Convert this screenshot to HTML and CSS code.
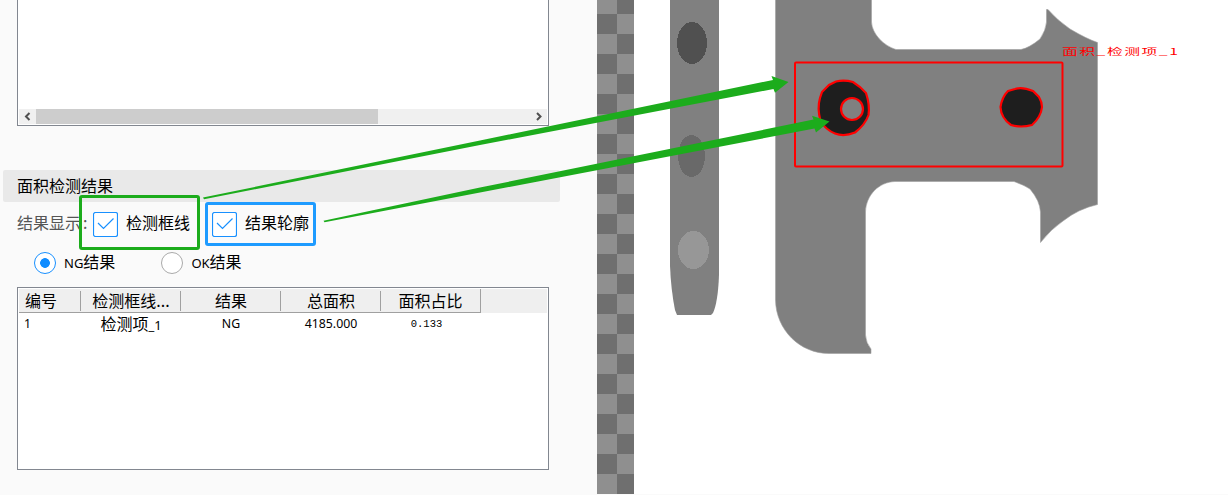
FILE: index.html
```html
<!DOCTYPE html>
<html lang="zh-CN">
<head>
<meta charset="utf-8">
<title>面积检测结果</title>
<link rel="stylesheet" href="styles.css">
</head>
<body>
<main class="app">
  <section class="panel">
    <div class="list">
      <div class="scrollbar">
        <svg class="scroll-arrow" viewBox="0 0 17 15"><path d="M10.500 4 7 7.500l3.500 3.500"/></svg>
        <div class="thumb"></div>
        <svg class="scroll-arrow" viewBox="0 0 17 15"><path d="M7 4l3.500 3.500L7 11"/></svg>
      </div>
    </div>
    <h2 class="title">面积检测结果</h2>
    <div class="options">
      <span class="caption">结果显示<span class="colon">:</span></span>
      <label class="check"><svg class="box" viewBox="0 0 25 25"><rect x=".5" y=".5" width="24" height="24" rx="2"/><path d="M5 11l5.500 5.500L20.500 6.500"/></svg><span class="label">检测框线</span></label>
      <label class="check second"><svg class="box" viewBox="0 0 25 25"><rect x=".5" y=".5" width="24" height="24" rx="2"/><path d="M5 11l5.500 5.500L20.500 6.500"/></svg><span class="label">结果轮廓</span></label>
    </div>
    <div class="radios">
      <label class="radio"><span class="dot on"></span><span class="choice"><span class="latin">NG</span>结果</span></label>
      <label class="radio"><span class="dot"></span><span class="choice"><span class="latin">OK</span>结果</span></label>
    </div>
    <div class="table">
      <div class="row head">
        <div class="cell first">编号</div><div class="cell">检测框线...</div><div class="cell">结果</div><div class="cell">总面积</div><div class="cell">面积占比</div>
      </div>
      <div class="row">
        <div class="cell first latin">1</div><div class="cell"><span>检测项<span class="latin">_1</span></span></div><div class="cell latin">NG</div><div class="cell latin">4185.000</div><div class="cell mono">0.133</div>
      </div>
    </div>
  </section>
  <div class="checker"></div>
  <section class="view">
    <svg class="scene" viewBox="634 0 594 495">
      <path fill="#808080" d="M670 0H719V275Q718 302 713 313L711 315H677L675 310Q671 290 670 266Z"/>
      <g shape-rendering="crispEdges">
        <ellipse cx="692" cy="43" rx="15" ry="21" fill="#505050"/>
        <ellipse cx="691.500" cy="156" rx="13.500" ry="21" fill="#696969"/>
        <ellipse cx="693.500" cy="250" rx="15.500" ry="19" fill="#979797"/>
      </g>
      <path fill="#808080" stroke="#a0a0a0" stroke-width=".6" d="M775.500-2V300C776 330 800 353.500 829 353.500H871V349Q866 343 865.500 335V212C866 195 879 182 895 181.500H1014Q1024 185 1030 189Q1040 201 1040.500 212V242.500Q1051 229 1063 221Q1078 209 1097.500 204.500V42.500Q1087 39 1070 29Q1057 20 1048 9.500H1046.500V22Q1046 30 1040 39Q1029 48 1021 49.500H896C884 46 872 34 871.500 22V-2Z"/>
      <g stroke="#f00" fill="none" stroke-width="2.200">
        <rect x="795" y="62.500" width="267.500" height="104" rx="1" stroke-width="2"/>
        <path fill="#1e1e1e" d="M836 81.500Q844 79.500 853 82L860 87 866 93Q870 105 868.500 115 865 125 855 132.500 844 137 835 133.500 826 130 820.500 121 817 108 820 98L822 92 829 85Z"/>
        <circle cx="852" cy="109" r="11" fill="#808080"/>
        <path fill="#1e1e1e" d="M1008 91L1015 89Q1022 86.500 1033 91L1039 97Q1042 102 1042 107 1041 117 1032 125 1021 128 1011 125 1001 118 1000.500 107 1002 97 1008 91Z"/>
      </g>
      <text class="tag" x="0" y="0" transform="translate(1062 55) scale(1.500 .85)" textLength="77.300">面积_检测项_1</text>
    </svg>
  </section>
  <div class="frame frame-green"></div>
  <div class="frame frame-blue"></div>
  <svg class="arrows" viewBox="0 0 1228 495">
    <path d="M203 197.600L480 140.400 773 80 771.500 76 788.500 82 775 92.700 773.500 89 480 145 204 199.300Z"/>
    <path d="M323.500 220.700L480 187.500 813.500 119.600 812 115.800 829.500 121.500 816 132.500 814.500 128.500 480 192.500 324.500 222.300Z"/>
  </svg>
</main>
</body>
</html>
```
FILE: styles.css
```css
* { box-sizing: border-box; }
body { margin: 0; }
.app {
  position: relative;
  display: flex;
  width: 1228px;
  height: 495px;
  overflow: hidden;
  background: #fafafa;
  color: #000;
  font: 16px/22px "Noto Sans CJK SC", sans-serif;
}
.panel { width: 597px; display: flex; flex-direction: column; align-items: flex-start; }
.list {
  width: 532px;
  height: 126px;
  margin-left: 17px;
  padding: 1px;
  border: 1px solid #828790;
  border-top: 0;
  background: #fff;
  display: flex;
  align-items: flex-end;
}
.scrollbar { display: flex; width: 100%; height: 15px; background: #f0f0f0; }
.scroll-arrow { width: 17px; height: 15px; fill: none; stroke: #505050; stroke-width: 2; }
.thumb { width: 342px; margin-right: 152px; background: #cdcdcd; }
.title {
  width: 557px;
  height: 32px;
  margin: 44px 0 0 3px;
  padding-left: 14px;
  border-radius: 2px;
  background: #e9e9e9;
  font-size: 16px;
  font-weight: 400;
  line-height: 30px;
}
.options { display: flex; align-items: center; height: 45px; padding-left: 17px; }
.caption { width: 76px; padding-bottom: 5px; color: #555; }
.colon { margin-left: 2px; }
.check { display: flex; align-items: center; gap: 8px; }
.label { padding-bottom: 5px; }
.second { margin-left: 22px; }
.box { width: 25px; height: 25px; fill: #fff; stroke: #1890ff; stroke-width: 1.200; }
.box path { fill: none; }
.radios { display: flex; gap: 46px; height: 32px; align-items: center; padding-left: 34px; }
.radio { display: flex; align-items: center; gap: 8px; }
.choice { padding-bottom: 2px; }
.dot { width: 22px; height: 22px; border: 1px solid #aaa; border-radius: 50%; background: #fff; }
.dot.on { border-color: #1890ff; background: radial-gradient(circle, #108cff 4.500px, #fff 5.200px); }
.latin { font-family: "Noto Sans", sans-serif; font-size: 12.300px; }
.choice .latin, .cell .latin { font-size: 13px; }
.table {
  width: 532px;
  height: 183px;
  margin: 8px 0 0 17px;
  padding: 1px;
  border: 1px solid #828790;
  background: #fff;
}
.row { display: grid; grid-template-columns: 62px repeat(4, 100px); grid-template-rows: 100%; height: 23px; }
.head { height: 24px; background: #efefef; }
.cell { display: flex; align-items: center; justify-content: center; padding-bottom: 2px; line-height: 18px; white-space: nowrap; }
.cell.first { justify-content: flex-start; padding-left: 5px; }
.head .cell.first { padding-left: 6px; }
.cell.mono { padding-right: 9px; font-family: "Liberation Mono", monospace; font-size: 10.500px; }
.head .cell {
  border-bottom: 1px solid #a0a0a0;
  background: linear-gradient(#a0a0a0, #a0a0a0) right 0 bottom 1px / 1px 20px no-repeat;
}
.head .cell:last-child { border-right: 1px solid #a0a0a0; background: none; }
.checker {
  width: 37px;
  height: 494px;
  background: repeating-conic-gradient(#8f8f8f 0 25%, #6f6f6f 0 50%) 0 14px / 40px 40px;
}
.view { width: 594px; height: 494px; background: #fff; overflow: hidden; }
.scene { display: block; width: 594px; height: 495px; }
.tag { fill: #f00; font: 10.500px "Noto Sans CJK SC", sans-serif; }
.frame { position: absolute; border: 3px solid #1cac1c; border-radius: 3px; }
.frame-green { left: 79px; top: 195px; width: 121px; height: 55px; }
.frame-blue { left: 205px; top: 202px; width: 111px; height: 44px; border-color: #1e9bff; }
.arrows { position: absolute; left: 0; top: 0; width: 1228px; height: 495px; fill: #1cac1c; pointer-events: none; }
```
